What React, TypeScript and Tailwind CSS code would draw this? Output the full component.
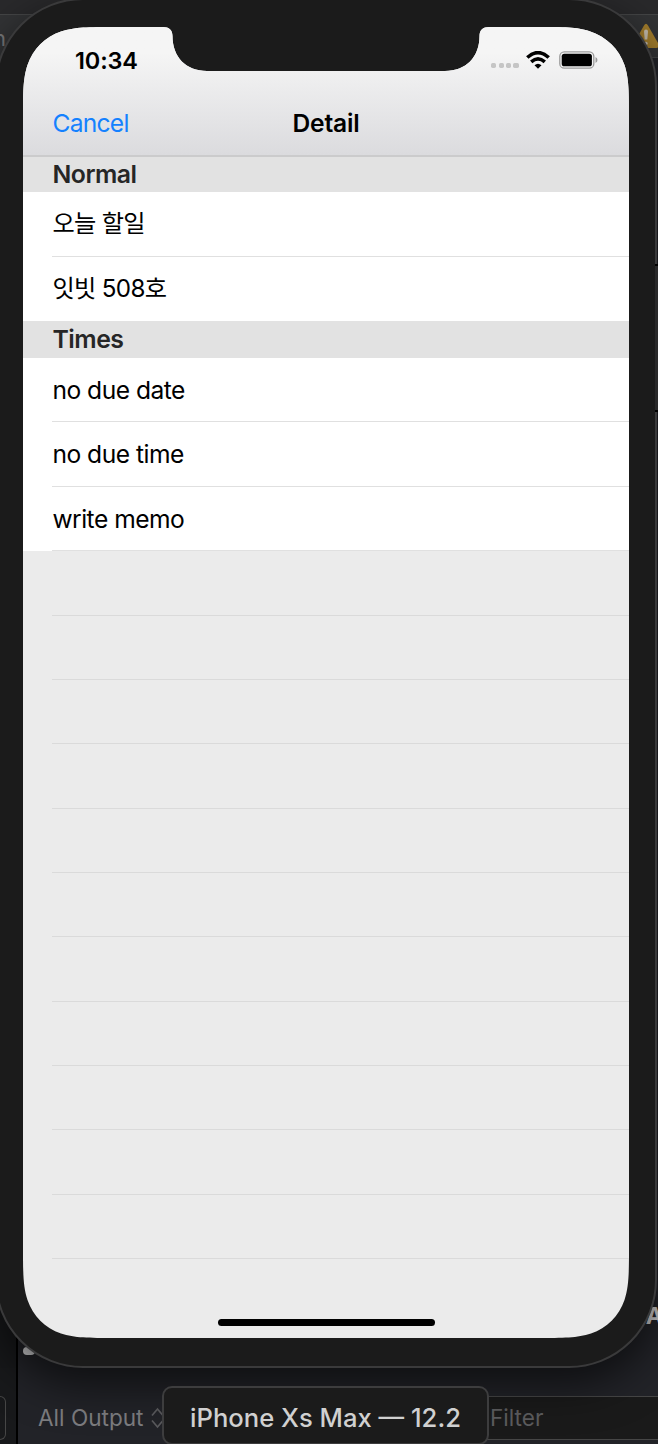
import React from "react";

const WarningIcon = () => (
  <svg className="block h-[26px] w-[28px]" viewBox="0 0 28 26">
    <path d="M12 2.5Q14 -1 16 2.5L26.5 21Q28 24.5 24.5 25H3.5Q0 24.500 1.500 21Z" fill="#a27d2c" />
    <path d="M12 8.500a2 2 0 0 1 4 0l-.7 8h-2.600z" fill="#c4bcae" />
    <circle cx="14" cy="20.500" r="1.700" fill="#c4bcae" />
  </svg>
);

const WifiIcon = () => (
  <svg className="block h-[18px] w-[24px]" viewBox="0 0 24 18" fill="none" stroke="#000">
    <path d="M1.300 6.500Q12 -3.200 22.700 6.500" strokeWidth="3.600" />
    <path d="M5.200 10.900Q12 4.900 18.800 10.900" strokeWidth="3.500" />
    <path d="M12 17.800L8.500 14.200Q12 11.200 15.500 14.200Z" fill="#000" stroke="none" />
  </svg>
);

const BatteryIcon = () => (
  <svg className="block h-[18px] w-[39px]" viewBox="0 0 39 18">
    <rect x=".8" y=".8" width="34" height="16.400" rx="4.500" fill="none" stroke="#9b9b9b" strokeWidth="1.300" />
    <rect x="2.700" y="2.700" width="30.200" height="12.600" rx="2.600" fill="#000" />
    <path d="M36.500 6Q38.500 7 38.500 9T36.500 12Z" fill="#9b9b9b" />
  </svg>
);

const Header = ({ title, tall }: { title: string; tall?: boolean }) => (
  <div
    className={
      (tall ? "h-[37px]" : "h-[35.400px]") +
      " flex shrink-0 items-center bg-[#e2e2e2] pl-[29.500px] text-[24.800px] font-semibold tracking-[-0.5px] text-[#262626]"
    }
  >
    {title}
  </div>
);

const Row = ({ label, last, korean }: { label?: string; last?: boolean; korean?: boolean }) => (
  <div className={(label ? "bg-white" : "bg-[#ebebeb]") + " h-[64.370px] shrink-0 pl-[29.400px]"}>
    <div
      className={
        (last ? "" : label ? "border-b border-[#e0e0e0]" : "border-b border-[#dadada]") +
        (korean ? " text-[24.200px] tracking-[-0.65px]" : " text-[24.600px] tracking-[-0.5px]") +
        " flex h-full items-center pt-px text-black"
      }
    >
      {label}
    </div>
  </div>
);

const Workspace = () => (
  <div className="flex h-full flex-col">
    <div className="h-[14px] bg-[#29292b]" />
    <div className="flex h-[44px] items-start justify-between border-y border-[#444546] bg-[#323335]">
      <span className="-ml-[7px] mt-[7px] text-[22px] text-[#77787a]">n</span>
      <span className="-mr-[2px] mt-[8px]">
        <WarningIcon />
      </span>
    </div>
    <div className="flex min-h-0 flex-1 bg-[#222328]">
      <div className="w-[16px] bg-[#17181a]" />
      <div className="w-[2px] bg-black" />
      <div className="flex flex-1 items-end justify-between pb-[13px]">
        <div className="ml-[5px] h-[8px] w-[12px] rounded-full bg-[#d5d5d7]" />
        <div className="-mr-[5px] mb-[22px] text-[23px] font-bold text-[#d0d0d2]">A</div>
      </div>
    </div>
    <div className="flex h-[76px] bg-[#222328]">
      <div className="flex w-[16px] bg-[#18191b] pt-[28px]">
        <div className="h-[44px] w-[6px] rounded-r-[6px] border border-l-0 border-[#464646]" />
      </div>
      <div className="w-[2px] bg-black" />
      <div className="flex flex-1 items-start pt-[28px]">
        <span className="ml-[20px] mt-[7px] w-[112px] whitespace-nowrap text-[22.600px] leading-[30px] text-[#7c7c7f]">
          All Output
        </span>
        <svg className="mt-[11px] h-[22px] w-[15px]" viewBox="0 0 15 22" fill="none" stroke="#5a5a5d" strokeWidth="1.700">
          <path d="M2 8.500L7.500 2L13 8.500M2 13.500L7.500 20L13 13.500" />
        </svg>
        <div className="ml-[305px] flex h-[44px] flex-1 items-center border-y border-[#464646] bg-[#1a1a1a] pl-[20px] text-[22.600px] text-[#5c5c5e]">
          Filter
        </div>
      </div>
    </div>
  </div>
);

const PhoneScreen = () => (
  <div className="flex h-[1311px] w-[606px] flex-col overflow-hidden bg-[#ebebeb] [clip-path:path('M92_0H140C146_0_149.500_3_149.500_9C149.500_30_163_44_184_44H422C443_44_456.500_30_456.500_9C456.500_3_460_0_466_0H514C541_0_554_0_566_4C584_10_596_22_601.500_38C606_52_606_65_606_92V1219C606_1246_606_1259_601.500_1273C596_1289_584_1301_568_1306.500C554_1311_541_1311_514_1311H92C65_1311_52_1311_38_1306.500C22_1301_10_1289_4.500_1273C0_1259_0_1246_0_1219V92C0_65_0_52_4.500_38C10_22_22_10_38_4.500C52_0_65_0_92_0Z')]">
    <div className="flex h-[130px] shrink-0 flex-col border-b-2 border-[#cbcbcc] bg-linear-to-b from-[#f5f5f5] from-20% to-[#dbdbde]">
      <div className="flex h-[65px] items-center justify-between pl-[52px] pr-[31.500px]">
        <span className="pt-[2px] text-[23.500px] font-semibold tracking-[-0.15px]">10:34</span>
        <div className="flex items-center">
          <div className="mr-[7.500px] mt-[12px] flex gap-[2.200px]">
            {[0, 1, 2, 3].map((n) => (
              <div key={n} className="size-[5.200px] rounded-[1.700px] bg-[#c5c5c5]" />
            ))}
          </div>
          <WifiIcon />
          <div className="ml-[8.500px]">
            <BatteryIcon />
          </div>
        </div>
      </div>
      <div className="grid h-[62px] grid-cols-3 items-center px-[29.500px] text-[24.600px]">
        <span className="tracking-[-0.75px] text-[#1481ff]">Cancel</span>
        <span className="text-center font-semibold tracking-[-0.2px]">Detail</span>
      </div>
    </div>
    <Header title="Normal" />
    <Row label="오늘 할일" korean />
    <Row label="잇빗 508호" korean last />
    <Header title="Times" tall />
    <Row label="no due date" />
    <Row label="no due time" />
    <Row label="write memo" />
    {Array.from({ length: 11 }, (_, i) => (
      <Row key={i} />
    ))}
    <div className="mt-[59.500px] h-[7.500px] w-[217px] shrink-0 self-center rounded-full bg-black" />
  </div>
);

export default function App() {
  return (
    <div className="relative h-[1444px] w-[658px] overflow-hidden font-[Inter,'Noto_Sans_CJK_KR',sans-serif]">
      <Workspace />
      <div className="absolute -left-[5px] -top-[2px] h-[1370px] w-[662px] rounded-[88px] border-2 border-[#3a3a3b] bg-[#1b1b1b] pl-[26px] pt-[27px] shadow-[0_16px_44px_0_rgba(0,0,0,0.6)]">
        <PhoneScreen />
      </div>
      <div className="absolute left-[655px] top-[264px] h-[148px] w-[3px] border-y-2 border-black bg-[#29292a]" />
      <div className="absolute left-[162px] top-[1386px] flex h-[59px] w-[327px] items-center justify-center whitespace-nowrap rounded-[10px] border-2 border-[#3d3d3e] bg-[#1b1b1b] pt-[5px] text-[25.600px] font-medium text-[#d0d0d0]">
        iPhone Xs Max — 12.2
      </div>
    </div>
  );
}
